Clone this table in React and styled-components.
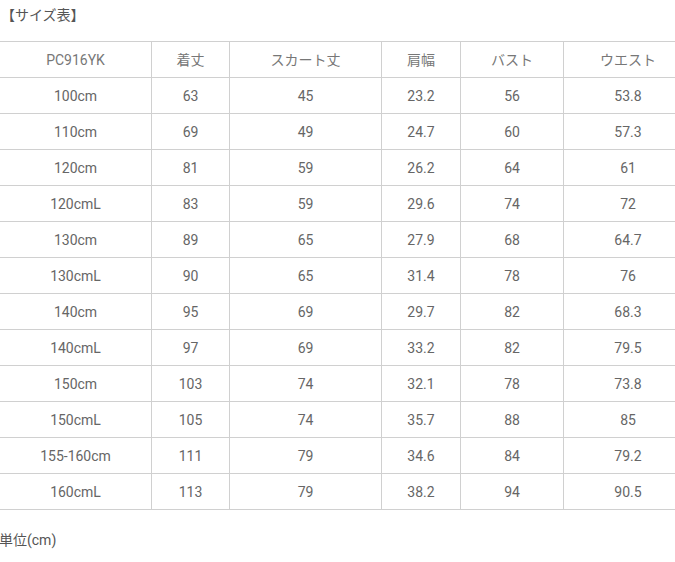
import React from 'react';
import styled, { createGlobalStyle } from 'styled-components';

const GlobalStyle = createGlobalStyle`
  body {
    margin: 0;
    background: #fff;
    overflow: hidden;
  }
`

const Page = styled.div`
  width: 675px;
  height: 562px;
  overflow: hidden;
  font-family: Roboto, "Noto Sans CJK JP", sans-serif;
  color: #666;
`

const Title = styled.div`
  font-size: 14px;
  line-height: 20px;
  padding: 5px 0 0 1px;
  height: 41px;
  box-sizing: border-box;
  color: #555;
`

const Table = styled.table`
  border-collapse: collapse;
  table-layout: fixed;
  width: 693px;
  margin-left: -1px;
  font-size: 14px;
`

const Cell = styled.td`
  border: 1px solid #d0d0d0;
  height: 35px;
  padding: 0;
  text-align: center;
  vertical-align: middle;
  line-height: 20px;
  color: ${p => (p.$head ? '#777' : '#666')};
  font-weight: 400;
`

const Note = styled.div`
  font-size: 14px;
  line-height: 20px;
  margin: 20px 0 0 -1px;
  color: #555;
`

const widths = [152, 78, 152, 79, 103, 129];

const head = ['PC916YK', '着丈', 'スカート丈', '肩幅', 'バスト', 'ウエスト'];

const rows = [
  ['100cm', 63, 45, 23.2, 56, 53.8],
  ['110cm', 69, 49, 24.7, 60, 57.3],
  ['120cm', 81, 59, 26.2, 64, 61],
  ['120cmL', 83, 59, 29.6, 74, 72],
  ['130cm', 89, 65, 27.9, 68, 64.7],
  ['130cmL', 90, 65, 31.4, 78, 76],
  ['140cm', 95, 69, 29.7, 82, 68.3],
  ['140cmL', 97, 69, 33.2, 82, 79.5],
  ['150cm', 103, 74, 32.1, 78, 73.8],
  ['150cmL', 105, 74, 35.7, 88, 85],
  ['155-160cm', 111, 79, 34.6, 84, 79.2],
  ['160cmL', 113, 79, 38.2, 94, 90.5],
];

function App() {
  return (
    <Page>
      <GlobalStyle />
      <Title>【サイズ表】</Title>
      <Table>
        <colgroup>
          {widths.map((w, i) => <col key={i} style={{ width: w }} />)}
        </colgroup>
        <tbody>
          <tr>
            {head.map(h => <Cell key={h} $head>{h}</Cell>)}
          </tr>
          {rows.map(r => (
            <tr key={r[0]}>
              {r.map((v, i) => <Cell key={i}>{v}</Cell>)}
            </tr>
          ))}
        </tbody>
      </Table>
      <Note>単位(cm)</Note>
    </Page>
  );
}

export default App;
